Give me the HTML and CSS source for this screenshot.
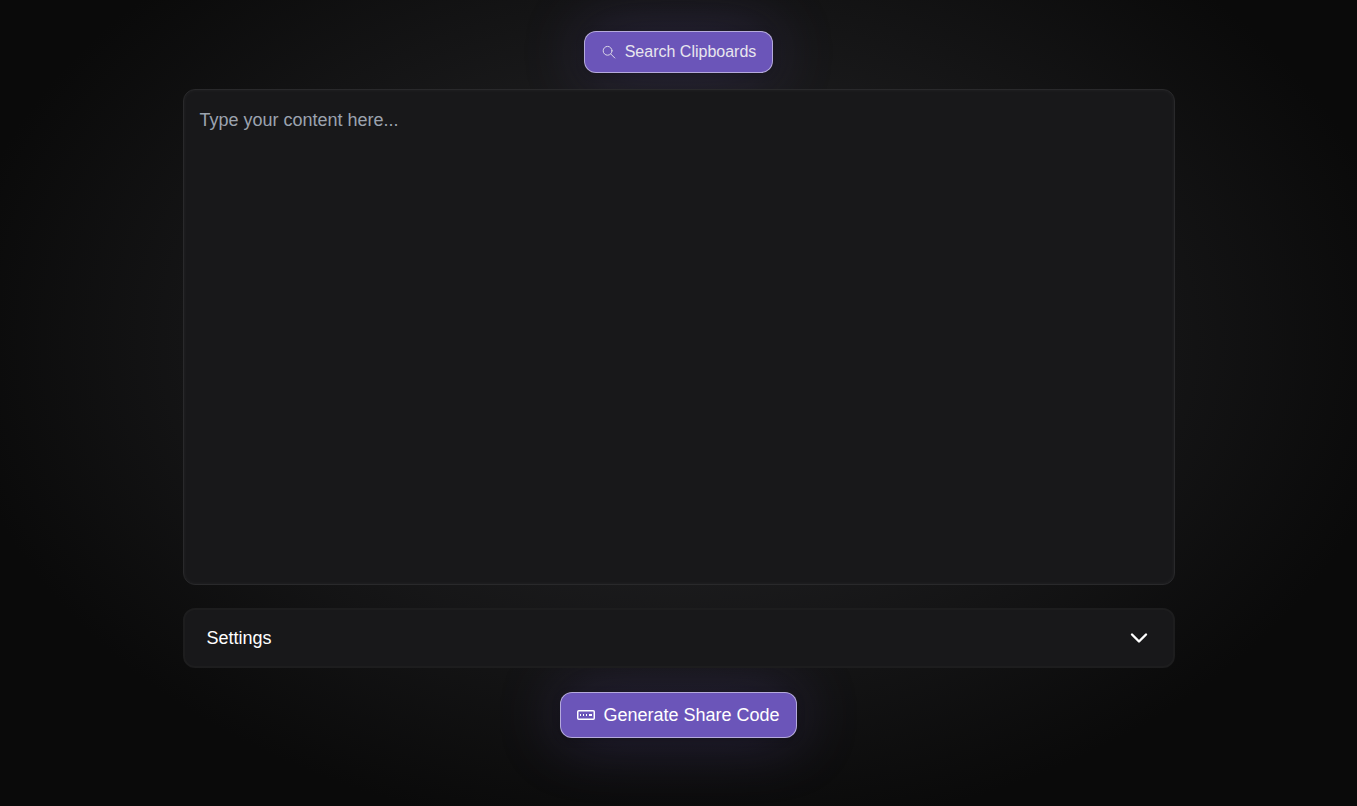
FILE: index.html
```html
<!DOCTYPE html>
<html lang="en">
<head>
	<meta charset="utf-8">
	<meta name="viewport" content="width=device-width, initial-scale=1">
	<title>Clipboard</title>

	<link rel="stylesheet" href="styles.css">
</head>
<body>

<main class="container">
	<button type="button" class="btn btn-search">
		<svg class="icon-search" viewBox="0 0 14 14" fill="none" stroke="currentColor" stroke-linecap="round" aria-hidden="true">
			<circle cx="5.6" cy="5.8" r="4.4"/>
			<path d="M8.8 9l4 4"/>
		</svg>
		Search Clipboards
	</button>

	<textarea class="content" placeholder="Type your content here..." aria-label="Content"></textarea>

	<button type="button" class="settings" aria-expanded="false">
		Settings
		<svg class="icon-chevron" viewBox="0 0 24 24" fill="none" stroke="currentColor" stroke-width="2.4" stroke-linecap="round" stroke-linejoin="round" aria-hidden="true">
			<path d="M5 8.5l7 7 7-7"/>
		</svg>
	</button>

	<button type="button" class="btn btn-generate">
		<svg class="icon-code" viewBox="0 0 18 18" fill="currentColor" aria-hidden="true">
			<rect x="0.75" y="4.75" width="16.5" height="8.5" rx="1" fill="none" stroke="currentColor" stroke-width="1.5"/>
			<path d="M3 8h1v2H3zM6 8h1v2H6zM9 8h1v2H9zM12 8h3v2h-3z"/>
		</svg>
		Generate Share Code
	</button>
</main>

</body>
</html>
```
FILE: styles.css
```css
* {
	box-sizing: border-box;
}

body {
	margin: 0;
	min-height: 100vh;
	background: radial-gradient(ellipse at 50% 42%, #29292c 0%, #0a0a0a 76%);
	color: #fff;
	font-family: "Liberation Sans", Arial, sans-serif;
}

.container {
	display: flex;
	flex-direction: column;
	align-items: center;
	max-width: 1024px;
	min-height: 100vh;
	margin: 0 auto;
	padding: 31px 16px 68px;
}

.btn {
	display: flex;
	align-items: center;
	gap: 8px;
	padding: 0 16px;
	border: 1px solid rgba(255, 255, 255, 0.5);
	border-radius: 12px;
	background: #6b55b9;
	color: #fff;
	font-family: inherit;
	box-shadow: 0 2px 8px rgba(0, 0, 0, 0.2), 0 0 64px rgba(107, 85, 185, 0.3);
	cursor: pointer;
}

.btn-search {
	height: 42px;
	margin-bottom: 16px;
	color: #e8e6ee;
	font-size: 16px;
}

.btn-generate {
	height: 46px;
	font-size: 18px;
}

.icon-search {
	width: 14px;
	height: 14px;
	margin: 0 1px;
	opacity: 0.9;
}

.icon-code {
	width: 18px;
	height: 18px;
}

.content {
	flex: 1;
	width: 100%;
	min-height: 300px;
	margin-bottom: 23px;
	padding: 16px;
	border: 1px solid #29292b;
	border-radius: 12px;
	background: #18181a;
	box-shadow: inset 0 0 4px rgba(255, 255, 255, 0.05);
	color: #fff;
	font-family: inherit;
	font-size: 18px;
	line-height: 28px;
	resize: none;
	outline: none;
}

.content::placeholder {
	color: #9ca3af;
}

/* sits above the glow of the button below */
.settings {
	z-index: 1;
	display: flex;
	align-items: center;
	justify-content: space-between;
	width: 100%;
	height: 60px;
	margin-bottom: 24px;
	padding: 0 22px;
	border: 2px solid #1d1d1e;
	border-radius: 12px;
	background: #18181a;
	color: #fff;
	font-family: inherit;
	font-size: 18px;
	cursor: pointer;
}

.icon-chevron {
	width: 24px;
	height: 24px;
}
```
